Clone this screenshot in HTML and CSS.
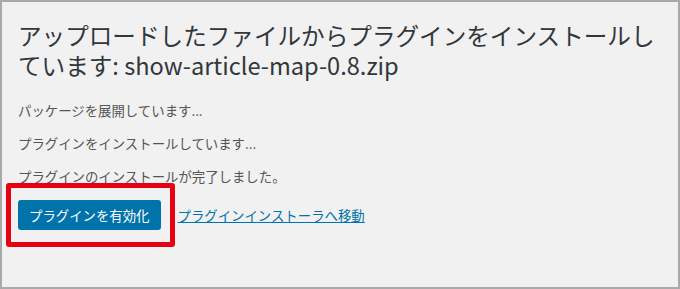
FILE: index.html
```html
<!DOCTYPE html>
<html lang="ja">
<head>
    <meta charset="UTF-8" />
    <meta name="viewport" content="width=device-width, initial-scale=1.0" />
    <title>プラグインのインストール</title>
    <link rel="stylesheet" href="styles.css">
</head>
<body>

    <div class="wrap">
        <h1 class="install-title">アップロードしたファイルからプラグインをインストールしています: show-article-map-0.8.zip</h1>

        <p class="install-step">パッケージを展開しています...</p>
        <p class="install-step">プラグインをインストールしています...</p>
        <p class="install-step">プラグインのインストールが完了しました。</p>

        <div class="install-actions">
            <a class="button-primary" href="#">プラグインを有効化</a>
            <a class="action-link" href="#">プラグインインストーラへ移動</a>
            <span class="highlight-box"></span>
        </div>
    </div>

</body>
</html>
```

FILE: styles.css
```css
body {
    font-family: "Noto Sans CJK JP", "Noto Sans", sans-serif;
    margin: 0;
    padding: 0;
    background-color: #fff;
}

.wrap {
    box-sizing: border-box;
    height: 289px;
    border: 2px solid #a9a9a9;
    background-color: #f1f1f1;
    padding: 18px 10px 0 16px;
}

.install-title {
    margin: 0 0 20px 0;
    font-size: 23.6px;
    font-weight: normal;
    line-height: 30px;
    color: #32373c;
}

.install-step {
    margin: 0 0 13px 0;
    font-size: 13.4px;
    line-height: 20px;
    color: #555;
}

.install-actions {
    position: relative;
    display: flex;
    align-items: center;
    gap: 17px;
    margin-top: 14px;
}

.button-primary {
    display: inline-block;
    height: 30px;
    line-height: 30px;
    padding: 0 11px;
    font-size: 13.4px;
    color: #fff;
    text-decoration: none;
    background-color: #0073aa;
    border-radius: 3px;
}

.action-link {
    font-size: 13.4px;
    color: #0073aa;
    text-decoration: underline;
}

/* 注目枠 */
.highlight-box {
    position: absolute;
    left: -12px;
    top: -17px;
    width: 159px;
    height: 54px;
    border: 5px solid #e50012;
    border-radius: 3px;
}
```
